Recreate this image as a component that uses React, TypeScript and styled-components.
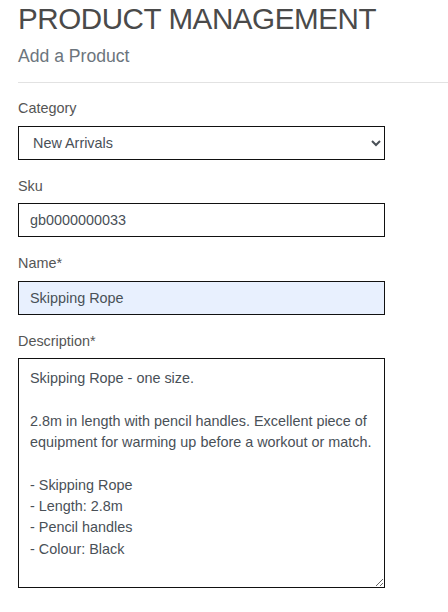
import React from "react";
import styled, { createGlobalStyle } from "styled-components";

const Global = createGlobalStyle`
  html, body { margin: 0; padding: 0; background: #fff; }
  body { font-family: "Liberation Sans", Arial, sans-serif; }
`;

const Page = styled.div`
  padding: 0 0 0 18px;
  width: 430px;
  overflow: hidden;
`;

const Title = styled.h1`
  margin: 0;
  font-size: 29.6px;
  font-weight: 400;
  line-height: 37px;
  color: #4a4a4a;
  letter-spacing: -0.45px;
`;

const Subtitle = styled.h2`
  margin: 8px 0 0 0;
  font-size: 17.6px;
  font-weight: 400;
  line-height: 22px;
  color: #6c757d;
`;

const Rule = styled.hr`
  margin: 15px 0 0 0;
  border: 0;
  border-top: 1px solid #e2e2e2;
  width: 100%;
`;

const Form = styled.form`
  display: flex;
  flex-direction: column;
  padding-top: 15px;
`;

const Field = styled.div`
  display: flex;
  flex-direction: column;
  margin-bottom: 16px;
`;

const Label = styled.label`
  font-size: 14.4px;
  line-height: 21.6px;
  color: #555;
  margin-bottom: 6px;
`;

const controlBase = `
  box-sizing: border-box;
  width: 367px;
  border: 1px solid #111;
  border-radius: 0;
  font-family: "Liberation Sans", Arial, sans-serif;
  font-size: 14.4px;
  color: #495057;
  outline: none;
`;

const Select = styled.select`
  ${controlBase}
  height: 34px;
  padding: 0 8px 0 10px;
  background: #fff;
`;

const Input = styled.input<{ $filled?: boolean }>`
  ${controlBase}
  height: 34px;
  padding: 0 11px;
  background: ${(p) => (p.$filled ? "#e8f0fe" : "#fff")};
`;

const TextArea = styled.textarea`
  ${controlBase}
  height: 230px;
  padding: 9px 11px;
  line-height: 21.3px;
  background: #fff;
  resize: vertical;
`;

const description = `Skipping Rope - one size.

2.8m in length with pencil handles. Excellent piece of equipment for warming up before a workout or match.

- Skipping Rope
- Length: 2.8m
- Pencil handles
- Colour: Black`;

export default function App() {
  return (
    <>
      <Global />
      <Page>
        <Title>PRODUCT MANAGEMENT</Title>
        <Subtitle>Add a Product</Subtitle>
        <Rule />
        <Form>
          <Field>
            <Label>Category</Label>
            <Select defaultValue="new">
              <option value="new">New Arrivals</option>
            </Select>
          </Field>
          <Field>
            <Label>Sku</Label>
            <Input defaultValue="gb0000000033" />
          </Field>
          <Field>
            <Label>Name*</Label>
            <Input $filled defaultValue="Skipping Rope" />
          </Field>
          <Field>
            <Label>Description*</Label>
            <TextArea defaultValue={description} spellCheck={false} />
          </Field>
        </Form>
      </Page>
    </>
  );
}
